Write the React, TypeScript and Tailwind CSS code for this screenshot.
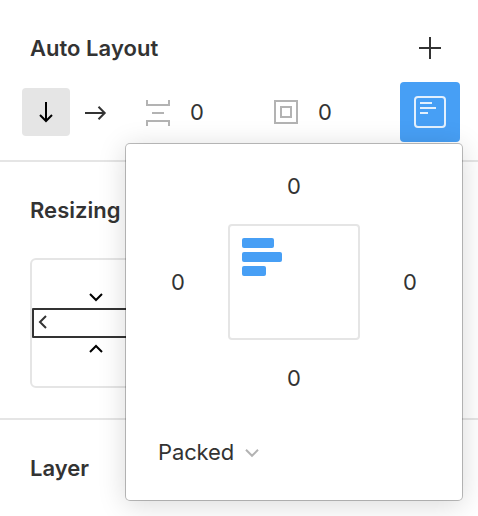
import type { ReactNode } from "react";

function Heading({ children }: { children: ReactNode }) {
  return (
    <div className="flex h-16 items-center justify-between pl-[30px] pr-9 text-[22px] font-semibold tracking-[0.03px]">
      {children}
    </div>
  );
}

type IconProps = { d: string; w: number; h: number; className?: string };

function Stroke({ d, w, h, className = "" }: IconProps) {
  return (
    <svg width={w} height={h} viewBox={`0 0 ${w} ${h}`} fill="none" stroke="currentColor" strokeWidth={2} className={`shrink-0 ${className}`}>
      <path d={d} />
    </svg>
  );
}

function AlignmentPopup() {
  return (
    <div className="absolute left-[125px] top-[143px] flex h-[358px] w-[338px] flex-col rounded-[5px] border border-black/25 bg-white bg-clip-padding pt-5 shadow-[0_4px_28px_rgba(0,0,0,0.15)]">
      <div className="grid grid-cols-[102px_132px_102px] grid-rows-[60px_116px_76px] place-items-center">
        <span className="col-start-2 row-start-1 -mt-[16px]">0</span>
        <span className="col-start-1 row-start-2 pl-0.5">0</span>
        <div className="col-start-2 row-start-2 flex h-full w-full flex-col gap-1 rounded border-2 border-[#e5e5e5] p-3">
          <div className="h-2.5 w-8 rounded-xs bg-[#479ff5]" />
          <div className="h-2.5 w-10 rounded-xs bg-[#479ff5]" />
          <div className="h-2.5 w-6 rounded-xs bg-[#479ff5]" />
        </div>
        <span className="col-start-3 row-start-2 pr-0.5">0</span>
        <span className="col-start-2 row-start-3">0</span>
      </div>
      <div className="mt-1 flex h-16 items-center gap-2.5 pl-8">
        <span className="tracking-[-0.12px]">Packed</span>
        <Stroke w={16} h={10} d="M2 1.8 8 7.8 14 1.8" className="mt-0.5 text-[#b3b3b3]" />
      </div>
    </div>
  );
}

export default function App() {
  return (
    <div className="relative h-[516px] w-[478px] overflow-hidden bg-white font-['Inter','Liberation_Sans',sans-serif] text-[22px] leading-8 text-[#333]">
      <section className="h-[162px] border-b-2 border-[#e5e5e5] pt-4">
        <Heading>
          <span>Auto Layout</span>
          <Stroke w={24} h={24} d="M12 1v22M1 12h22" />
        </Heading>
        <div className="mt-0.5 flex h-[60px] items-center pl-[22px]">
          <button className="flex size-12 items-center justify-center rounded bg-[#e5e5e5] text-black">
            <Stroke w={16} h={24} d="M8 2v19M2 15l6 6 6-6" />
          </button>
          <Stroke w={24} h={16} d="M1 9h20M14.5 2.8l6.2 6.2-6.2 6.2" className="ml-3.5" />
          <Stroke w={24} h={26} d="M1 0v5h22V0M6 13h12M1 26v-5h22v5" className="ml-[38px] mt-0.5 text-[#b3b3b3]" />
          <span className="ml-5 w-14">0</span>
          <Stroke w={24} h={24} d="M1 1h22v22H1zM7 7h10v10H7z" className="ml-7 text-[#b3b3b3]" />
          <span className="ml-5">0</span>
          <button className="ml-auto mr-[18px] flex size-[60px] items-center justify-center rounded bg-[#479ff5]">
            <span className="flex size-8 flex-col gap-[3px] rounded border-2 border-[#e3f0fd] p-1">
              <i className="h-0.5 w-3 bg-[#e3f0fd]" />
              <i className="h-0.5 w-4 bg-[#e3f0fd]" />
              <i className="h-0.5 w-2 bg-[#e3f0fd]" />
            </span>
          </button>
        </div>
      </section>

      <section className="h-[258px] border-b-2 border-[#e5e5e5] pt-4">
        <Heading>Resizing</Heading>
        <div className="ml-[30px] mt-4 flex h-[130px] w-[132px] flex-col items-center rounded-md border-2 border-[#e5e5e5]">
          <div className="flex h-12 items-end pb-1.5 text-black">
            <Stroke w={16} h={10} d="M2 2l6 6 6-6" />
          </div>
          <div className="flex h-[30px] w-full items-center rounded-[1px] border-2 border-[#333] pl-1">
            <Stroke w={10} h={16} d="M8 2 2 8l6 6" className="-mt-0.5" />
          </div>
          <div className="flex h-12 items-start pt-1.5 text-black">
            <Stroke w={16} h={10} d="M2 8l6-6 6 6" />
          </div>
        </div>
      </section>

      <section className="pt-4">
        <Heading>Layer</Heading>
      </section>

      <AlignmentPopup />
    </div>
  );
}
